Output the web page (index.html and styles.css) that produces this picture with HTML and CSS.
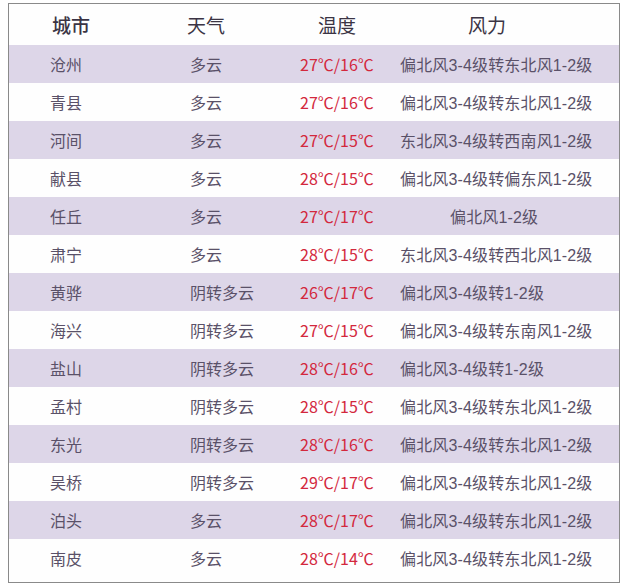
FILE: index.html
```html
<!DOCTYPE html>
<html lang="zh-CN">
<head>
<meta charset="utf-8">
<title>沧州天气</title>
<link rel="stylesheet" href="styles.css">
</head>
<body>
<div class="table">
  <div class="row head">
    <div class="c1">城市</div><div class="c2">天气</div><div class="c3">温度</div><div class="c4">风力</div>
  </div>
  <div class="row alt"><div class="c1">沧州</div><div class="c2">多云</div><div class="c3 t">27℃/16℃</div><div class="c4">偏北风3-4级转东北风1-2级</div></div>
  <div class="row"><div class="c1">青县</div><div class="c2">多云</div><div class="c3 t">27℃/16℃</div><div class="c4">偏北风3-4级转东北风1-2级</div></div>
  <div class="row alt"><div class="c1">河间</div><div class="c2">多云</div><div class="c3 t">27℃/15℃</div><div class="c4">东北风3-4级转西南风1-2级</div></div>
  <div class="row"><div class="c1">献县</div><div class="c2">多云</div><div class="c3 t">28℃/15℃</div><div class="c4">偏北风3-4级转偏东风1-2级</div></div>
  <div class="row alt"><div class="c1">任丘</div><div class="c2">多云</div><div class="c3 t">27℃/17℃</div><div class="c4 mid">偏北风1-2级</div></div>
  <div class="row"><div class="c1">肃宁</div><div class="c2">多云</div><div class="c3 t">28℃/15℃</div><div class="c4">东北风3-4级转西北风1-2级</div></div>
  <div class="row alt"><div class="c1">黄骅</div><div class="c2">阴转多云</div><div class="c3 t">26℃/17℃</div><div class="c4">偏北风3-4级转1-2级</div></div>
  <div class="row"><div class="c1">海兴</div><div class="c2">阴转多云</div><div class="c3 t">27℃/15℃</div><div class="c4">偏北风3-4级转东南风1-2级</div></div>
  <div class="row alt"><div class="c1">盐山</div><div class="c2">阴转多云</div><div class="c3 t">28℃/16℃</div><div class="c4">偏北风3-4级转1-2级</div></div>
  <div class="row"><div class="c1">孟村</div><div class="c2">阴转多云</div><div class="c3 t">28℃/15℃</div><div class="c4">偏北风3-4级转东北风1-2级</div></div>
  <div class="row alt"><div class="c1">东光</div><div class="c2">阴转多云</div><div class="c3 t">28℃/16℃</div><div class="c4">偏北风3-4级转东北风1-2级</div></div>
  <div class="row"><div class="c1">吴桥</div><div class="c2">阴转多云</div><div class="c3 t">29℃/17℃</div><div class="c4">偏北风3-4级转东北风1-2级</div></div>
  <div class="row alt"><div class="c1">泊头</div><div class="c2">多云</div><div class="c3 t">28℃/17℃</div><div class="c4">偏北风3-4级转东北风1-2级</div></div>
  <div class="row"><div class="c1">南皮</div><div class="c2">多云</div><div class="c3 t">28℃/14℃</div><div class="c4">偏北风3-4级转东北风1-2级</div></div>
</div>
</body>
</html>
```

FILE: styles.css
```css
html, body {
  margin: 0;
  padding: 0;
  background: #ffffff;
}
body {
  font-family: "Liberation Sans", "Noto Sans CJK SC", sans-serif;
  color: #5a5168;
}
.table {
  margin: 3px 0 0 8px;
  width: 610px;
  border: 1px solid #8a8a8a;
  padding-bottom: 5px;
  background: #fefefe;
}
.row {
  display: grid;
  grid-template-columns: 140px 140px 110px 1fr;
  height: 38px;
  align-items: center;
  font-size: 16px;
  white-space: nowrap;
}
.row.alt {
  background: #ddd6e8;
}
.row.head {
  height: 41px;
  font-size: 19px;
  color: #3b3444;
}
.c1 { padding-left: 41px; }
.c2 { padding-left: 41px; }
.c3 { padding-left: 11px; }
.c4 { padding-left: 1px; letter-spacing: 0.15px; }
.head .c1 { padding-left: 43px; font-weight: 500; }
.head .c2 { padding-left: 38px; }
.head .c3 { padding-left: 29px; }
.head .c4 { padding-left: 69px; letter-spacing: 0; }
.c4.mid { padding-left: 51px; }
.t {
  color: #d3283d;
  font-family: "Noto Sans CJK SC", sans-serif;
}
```
